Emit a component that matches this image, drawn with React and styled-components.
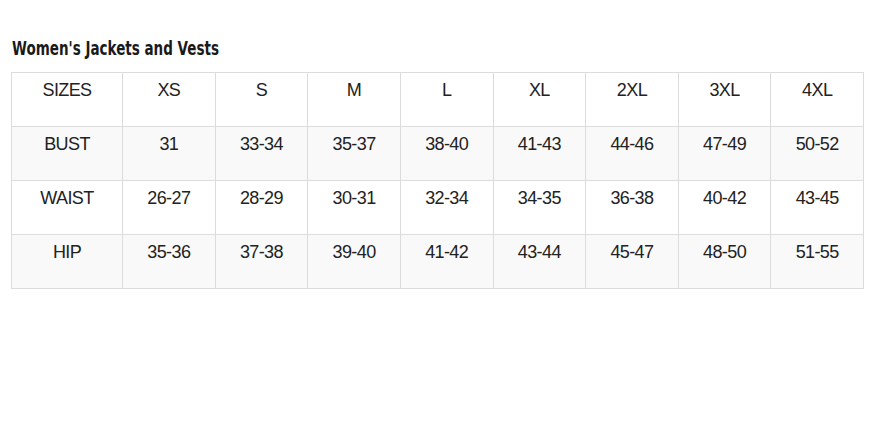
import React from "react";
import styled, { createGlobalStyle } from "styled-components";

const GlobalStyle = createGlobalStyle`
  html, body {
    margin: 0;
    padding: 0;
    background: #ffffff;
  }
`;

const Page = styled.div`
  padding: 36px 0 0 11px;
  width: 882px;
  box-sizing: border-box;
`;

// the original heading uses a narrow display face; squeeze DejaVu to match
const Title = styled.h2`
  margin: 0 0 12px 1px;
  font-family: "DejaVu Sans", sans-serif;
  font-size: 20px;
  line-height: 24px;
  font-weight: bold;
  color: #1a1a1a;
  transform: scaleX(0.675);
  transform-origin: left center;
  white-space: nowrap;
`;

const Table = styled.table`
  border-collapse: collapse;
  table-layout: fixed;
  width: 853px;
  font-family: "Liberation Sans", Arial, sans-serif;
  font-size: 18px;
  letter-spacing: -0.6px;
  color: #222222;
`;

const Row = styled.tr`
  background: ${(p) => (p.$shade ? "#f9f9f9" : "#ffffff")};
`;

const Cell = styled.td`
  height: 54px;
  box-sizing: border-box;
  border: 1px solid #dcdcdc;
  padding: 7px 0 0;
  text-align: center;
  vertical-align: top;
  line-height: 21px;
`;

const sizes = ["XS", "S", "M", "L", "XL", "2XL", "3XL", "4XL"];

const rows = [
  ["SIZES", ...sizes],
  ["BUST", "31", "33-34", "35-37", "38-40", "41-43", "44-46", "47-49", "50-52"],
  ["WAIST", "26-27", "28-29", "30-31", "32-34", "34-35", "36-38", "40-42", "43-45"],
  ["HIP", "35-36", "37-38", "39-40", "41-42", "43-44", "45-47", "48-50", "51-55"],
];

export default function App() {
  return (
    <>
      <GlobalStyle />
      <Page>
        <Title>Women's Jackets and Vests</Title>
        <Table>
          <colgroup>
            <col style={{ width: 111 }} />
            {sizes.map((s) => (
              <col key={s} />
            ))}
          </colgroup>
          <tbody>
            {rows.map((r, i) => (
              <Row key={r[0]} $shade={i % 2 === 1}>
                {r.map((c, j) => (
                  <Cell key={j}>{c}</Cell>
                ))}
              </Row>
            ))}
          </tbody>
        </Table>
      </Page>
    </>
  );
}
